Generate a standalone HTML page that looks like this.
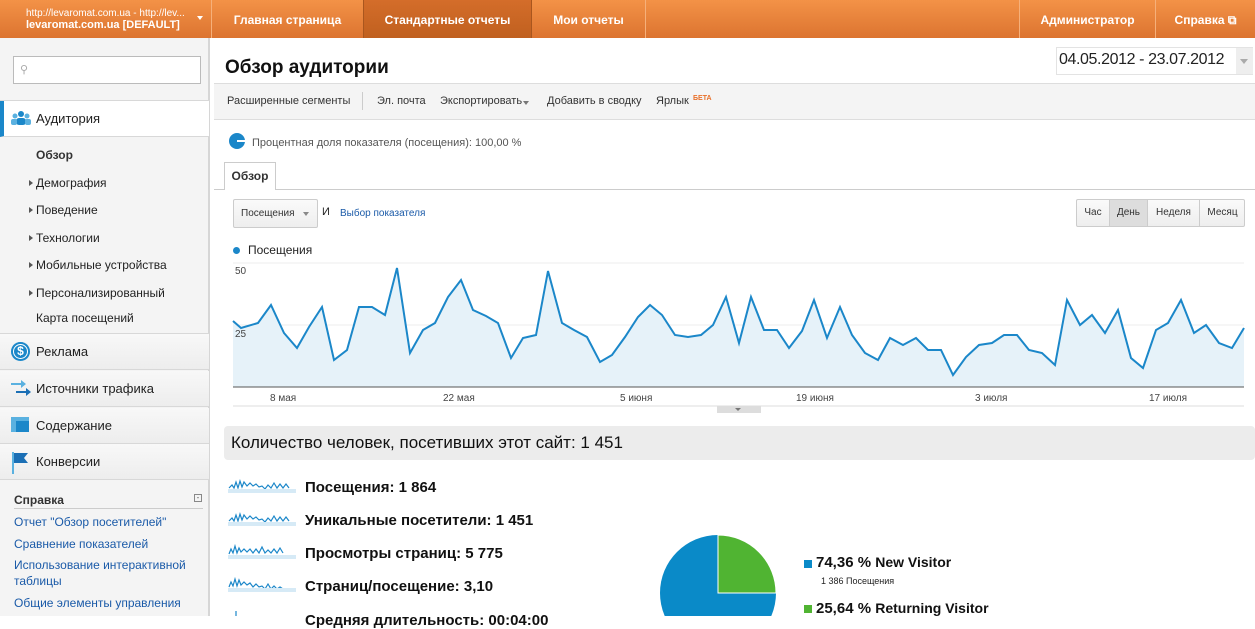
<!DOCTYPE html>
<html><head><meta charset="utf-8"><style>
*{margin:0;padding:0;box-sizing:border-box}
body{width:1255px;height:616px;overflow:hidden;background:#fff;font-family:"Liberation Sans",Arial,sans-serif;position:relative;color:#222}
.a{position:absolute;white-space:nowrap}
#hdr{left:0;top:0;width:1255px;height:38px;background:linear-gradient(#f39247,#dc7430);}
.nav{top:0;height:38px;line-height:40px;color:#fff;font-weight:bold;font-size:12px;text-align:center;border-left:1px solid #f6b07a}
#side{left:0;top:38px;width:210px;height:578px;background:#f4f4f4;border-right:2px solid #d6d6d6}
.sec{left:0;width:209px;height:36px;border-bottom:1px solid #d8d8d8;background:linear-gradient(#f8f8f8,#ededed);font-size:13px;line-height:36px;padding-left:36px;color:#222}
.sub{left:36px;font-size:12px;color:#222}
.tri{position:absolute;left:-7px;top:4px;border-left:4px solid #555;border-top:3px solid transparent;border-bottom:3px solid transparent}
.lk{left:14px;font-size:12px;color:#1a5aa8}
.met{left:305px;font-size:15px;font-weight:bold;color:#111}
</style></head><body>
<div id="hdr" class="a"></div>
<div class="a" style="left:26px;top:8px;font-size:10px;color:#fff">http://levaromat.com.ua - http://lev...</div>
<div class="a" style="left:26px;top:19px;font-size:11px;color:#fff;font-weight:bold">levaromat.com.ua [DEFAULT]</div>
<div class="a" style="left:197px;top:16px;border-top:4px solid #fff;border-left:3px solid transparent;border-right:3px solid transparent"></div>
<div class="a nav" style="left:211px;width:152px">Главная страница</div>
<div class="a nav" style="left:363px;width:168px;background:linear-gradient(#d46d2a,#c0601f);border-left:1px solid #a9561e">Стандартные отчеты</div>
<div class="a nav" style="left:531px;width:114px;border-left:1px solid #a9561e">Мои отчеты</div>
<div class="a nav" style="left:645px;width:374px"></div>
<div class="a nav" style="left:1019px;width:136px">Администратор</div>
<div class="a nav" style="left:1155px;width:100px">Справка ⧉</div>

<div id="side" class="a"></div>
<div class="a" style="left:13px;top:56px;width:188px;height:28px;border:1px solid #bbb;background:#fff"></div>
<div class="a" style="left:20px;top:63px;font-size:11px;color:#aaa">&#9906;</div>
<div class="a" style="left:0;top:100px;width:210px;height:1px;background:#d8d8d8"></div>
<div class="a sec" style="top:101px;background:#fff;border-left:4px solid #1b87c9;padding-left:32px">Аудитория</div>
<div class="a" style="left:11px;top:110px;width:20px;height:16px"><svg width="20" height="16"><circle cx="10" cy="4" r="3" fill="#1b87c9"/><circle cx="4" cy="6" r="2.5" fill="#5ab1e0"/><circle cx="16" cy="6" r="2.5" fill="#5ab1e0"/><rect x="5" y="8" width="10" height="7" rx="3" fill="#1b87c9"/><rect x="0" y="9" width="6" height="6" rx="2" fill="#5ab1e0"/><rect x="14" y="9" width="6" height="6" rx="2" fill="#5ab1e0"/></svg></div>
<div class="a sub" style="top:148px;font-weight:bold;color:#333">Обзор</div>
<div class="a sub" style="top:176px"><i class="tri"></i>Демография</div>
<div class="a sub" style="top:203px"><i class="tri"></i>Поведение</div>
<div class="a sub" style="top:231px"><i class="tri"></i>Технологии</div>
<div class="a sub" style="top:258px"><i class="tri"></i>Мобильные устройства</div>
<div class="a sub" style="top:286px"><i class="tri"></i>Персонализированный</div>
<div class="a sub" style="top:311px">Карта посещений</div>
<div class="a" style="left:0;top:333px;width:209px;height:1px;background:#d8d8d8"></div>
<div class="a sec" style="top:334px">Реклама</div>
<div class="a" style="left:11px;top:342px;width:19px;height:19px;border-radius:50%;background:#1b87c9;color:#fff;font-size:12px;font-weight:bold;text-align:center;line-height:19px;box-shadow:inset 0 0 0 2px #1b87c9,inset 0 0 0 3px #fff">$</div>
<div class="a sec" style="top:371px">Источники трафика</div>
<div class="a" style="left:11px;top:378px"><svg width="20" height="20"><path d="M0 5h10v-3l5 4-5 4v-3H0z" fill="#5ab1e0"/><path d="M5 13h10v-3l5 4-5 4v-3H5z" fill="#1b6fb5"/></svg></div>
<div class="a sec" style="top:408px">Содержание</div>
<div class="a" style="left:11px;top:417px;width:18px;height:15px;background:#1b87c9;border-top:4px solid #5ab1e0"><div style="width:5px;height:11px;background:#5ab1e0"></div></div>
<div class="a sec" style="top:444px">Конверсии</div>
<div class="a" style="left:11px;top:452px"><svg width="18" height="22"><rect x="1" y="0" width="2" height="22" fill="#5ab1e0"/><path d="M3 1h14l-4 5 4 5H3z" fill="#1b6fb5"/></svg></div>
<div class="a" style="left:14px;top:493px;font-size:12px;font-weight:bold;color:#333">Справка</div>
<div class="a" style="left:194px;top:494px;width:8px;height:8px;border:1px solid #888;font-size:8px;line-height:5px;text-align:center;color:#555">-</div>
<div class="a" style="left:14px;top:508px;width:189px;height:1px;background:#ccc"></div>
<div class="a lk" style="top:515px">Отчет "Обзор посетителей"</div>
<div class="a lk" style="top:537px">Сравнение показателей</div>
<div class="a lk" style="top:558px">Использование интерактивной</div>
<div class="a lk" style="top:574px">таблицы</div>
<div class="a lk" style="top:596px">Общие элементы управления</div>

<div class="a" style="left:225px;top:57px;font-size:19px;font-weight:bold;color:#111">Обзор аудитории</div>
<div class="a" style="left:1056px;top:47px;width:197px;height:28px;border:1px solid #e3e3e3;background:#fff"></div>
<div class="a" style="left:1059px;top:51px;font-size:16px;letter-spacing:-0.4px;color:#222">04.05.2012 - 23.07.2012</div>
<div class="a" style="left:1236px;top:48px;width:17px;height:26px;background:#eee"></div>
<div class="a" style="left:1240px;top:59px;border-top:5px solid #aaa;border-left:4px solid transparent;border-right:4px solid transparent"></div>
<div class="a" style="left:214px;top:83px;width:1041px;height:37px;background:#f4f4f4;border-top:1px solid #ddd;border-bottom:1px solid #ddd"></div>
<div class="a" style="left:227px;top:95px;font-size:11px;color:#333">Расширенные сегменты</div>
<div class="a" style="left:362px;top:92px;width:1px;height:18px;background:#ccc"></div>
<div class="a" style="left:377px;top:95px;font-size:11px;color:#333">Эл. почта</div>
<div class="a" style="left:440px;top:95px;font-size:11px;color:#333">Экспортировать</div>
<div class="a" style="left:523px;top:101px;border-top:4px solid #777;border-left:3px solid transparent;border-right:3px solid transparent"></div>
<div class="a" style="left:547px;top:95px;font-size:11px;color:#333">Добавить в сводку</div>
<div class="a" style="left:656px;top:95px;font-size:11px;color:#333">Ярлык</div>
<div class="a" style="left:693px;top:95px;font-size:7px;color:#e8702a;font-weight:bold">БЕТА</div>
<div class="a" style="left:229px;top:133px;width:16px;height:16px;border-radius:50%;background:#1b87c9"></div>
<div class="a" style="left:237px;top:140px;width:8px;height:2px;background:#fff"></div>
<div class="a" style="left:252px;top:137px;font-size:11px;color:#555">Процентная доля показателя (посещения): 100,00 %</div>
<div class="a" style="left:214px;top:189px;width:1041px;height:1px;background:#ccc"></div>
<div class="a" style="left:224px;top:162px;width:52px;height:28px;border:1px solid #ccc;border-bottom:none;background:#fff;font-size:12px;font-weight:bold;color:#333;text-align:center;line-height:26px">Обзор</div>
<div class="a" style="left:233px;top:199px;width:85px;height:29px;border:1px solid #ccc;border-radius:2px;background:linear-gradient(#fafafa,#eee);font-size:10px;color:#333;line-height:27px;padding-left:7px">Посещения</div>
<div class="a" style="left:303px;top:212px;border-top:4px solid #888;border-left:3px solid transparent;border-right:3px solid transparent"></div>
<div class="a" style="left:322px;top:206px;font-size:11px">И</div>
<div class="a" style="left:340px;top:208px;font-size:10px;color:#1a5aa8">Выбор показателя</div>
<div class="a" style="left:1076px;top:199px;width:169px;height:28px;border:1px solid #ccc;border-radius:2px;background:linear-gradient(#fafafa,#eee);font-size:10px;color:#333;line-height:26px">
<span class="a" style="left:0;width:32px;text-align:center">Час</span><span class="a" style="left:32px;width:39px;text-align:center;background:#ddd;border-left:1px solid #ccc;border-right:1px solid #ccc;height:26px">День</span><span class="a" style="left:71px;width:51px;text-align:center">Неделя</span><span class="a" style="left:122px;width:46px;text-align:center;border-left:1px solid #ccc">Месяц</span></div>
<div class="a" style="left:233px;top:247px;width:7px;height:7px;border-radius:50%;background:#1b87c9"></div>
<div class="a" style="left:248px;top:243px;font-size:12px;color:#222">Посещения</div>
<svg class="a" style="left:0;top:0" width="1255" height="420">
<line x1="233" y1="263" x2="1244" y2="263" stroke="#eee"/>
<line x1="233" y1="325" x2="1244" y2="325" stroke="#eee"/>
<path d="M233 321L241 328L258 323L271 305L284 333L297 348L309 327L322 307L334 360L347 350L359 307L372 307L385 315L397 268L410 353L423 330L435 323L448 297L461 280L473 310L486 316L498 323L511 358L523 338L536 335L548 271L562 323L574 330L587 337L600 362L612 355L625 337L638 317L650 305L662 315L675 335L688 337L701 335L713 325L726 297L739 343L751 297L764 330L777 330L789 348L802 331L814 300L827 338L840 307L852 335L865 353L878 360L890 338L903 345L916 338L928 350L941 350L953 375L966 357L979 345L992 343L1004 335L1017 335L1029 350L1042 353L1055 365L1067 300L1080 325L1092 315L1105 333L1118 310L1131 358L1143 368L1156 330L1168 323L1181 300L1194 333L1206 325L1219 343L1232 348L1244 328L1244 387L233 387Z" fill="#e6f2f9"/>
<path d="M233 321L241 328L258 323L271 305L284 333L297 348L309 327L322 307L334 360L347 350L359 307L372 307L385 315L397 268L410 353L423 330L435 323L448 297L461 280L473 310L486 316L498 323L511 358L523 338L536 335L548 271L562 323L574 330L587 337L600 362L612 355L625 337L638 317L650 305L662 315L675 335L688 337L701 335L713 325L726 297L739 343L751 297L764 330L777 330L789 348L802 331L814 300L827 338L840 307L852 335L865 353L878 360L890 338L903 345L916 338L928 350L941 350L953 375L966 357L979 345L992 343L1004 335L1017 335L1029 350L1042 353L1055 365L1067 300L1080 325L1092 315L1105 333L1118 310L1131 358L1143 368L1156 330L1168 323L1181 300L1194 333L1206 325L1219 343L1232 348L1244 328" fill="none" stroke="#1b87c9" stroke-width="2"/>
<line x1="233" y1="387" x2="1244" y2="387" stroke="#555"/>
<line x1="233" y1="406" x2="1244" y2="406" stroke="#ddd"/>
<g font-size="10" fill="#444" font-family="Liberation Sans"><text x="235" y="274">50</text><text x="235" y="337">25</text>
<text x="270" y="401">8 мая</text><text x="443" y="401">22 мая</text><text x="620" y="401">5 июня</text><text x="796" y="401">19 июня</text><text x="975" y="401">3 июля</text><text x="1149" y="401">17 июля</text></g>
<rect x="717" y="406" width="44" height="7" fill="#ddd"/><path d="M735 408h6l-3 3z" fill="#777"/>
</svg>
<div class="a" style="left:224px;top:426px;width:1031px;height:34px;background:#ececec;border-radius:4px;font-size:17px;line-height:34px;padding-left:7px;color:#111">Количество человек, посетивших этот сайт: 1 451</div>
<svg class="a" style="left:228px;top:476px" width="68" height="140"><g fill="none" stroke="#1b87c9" stroke-width="1.2">
<path d="M1 12l3-3 2 3 2-6 2 6 2-7 2 6 2-5 3 4 3-3 3 3 3-2 3 3 3-1 3 3 3-4 3 3 3-5 3 5 3-4 3 4 3-4 3 4"/>
<path d="M1 45l3-3 2 3 2-6 2 6 2-7 2 6 2-5 3 4 3-3 3 3 3-2 3 3 3-1 3 3 3-4 3 3 3-5 3 5 3-4 3 4 3-4 3 4"/>
<path d="M1 78l2-5 2 4 2-7 2 7 2-5 2 4 3-3 3 3 3-3 3 4 3-4 3 4 3-6 3 6 3-3 3 3 3-4 3 4 3-5 3 5"/>
<path d="M1 111l2-5 2 4 2-7 2 7 2-6 2 5 3-3 3 3 3-2 3 4 3-3 3 3 3-1 3 3 3-5 3 5 3-3 3 3 3-2 3 2"/>
<path d="M8 145v-10"/></g>
<rect x="0" y="13" width="68" height="4" fill="#d6eaf6"/><rect x="0" y="46" width="68" height="4" fill="#d6eaf6"/><rect x="0" y="79" width="68" height="4" fill="#d6eaf6"/><rect x="0" y="112" width="68" height="4" fill="#d6eaf6"/></svg>
<div class="a met" style="top:479px">Посещения: 1 864</div>
<div class="a met" style="top:512px">Уникальные посетители: 1 451</div>
<div class="a met" style="top:545px">Просмотры страниц: 5 775</div>
<div class="a met" style="top:578px">Страниц/посещение: 3,10</div>
<div class="a met" style="top:612px">Средняя длительность: 00:04:00</div>
<svg class="a" style="left:658px;top:533px" width="122" height="83"><circle cx="60" cy="60" r="58" fill="#0a8ac8"/><path d="M60 60L60 2A58 58 0 0 1 118 60Z" fill="#50b432" stroke="#fff" stroke-width="1"/></svg>
<div class="a" style="left:804px;top:560px;width:8px;height:8px;background:#0a8ac8"></div>
<div class="a" style="left:816px;top:554px;font-size:15px;font-weight:bold;color:#111">74,36 % <span style="font-size:14px">New Visitor</span></div>
<div class="a" style="left:821px;top:576px;font-size:9px;color:#222">1 386 Посещения</div>
<div class="a" style="left:804px;top:605px;width:8px;height:8px;background:#50b432"></div>
<div class="a" style="left:816px;top:600px;font-size:15px;font-weight:bold;color:#111">25,64 % <span style="font-size:14px">Returning Visitor</span></div>
</body></html>
